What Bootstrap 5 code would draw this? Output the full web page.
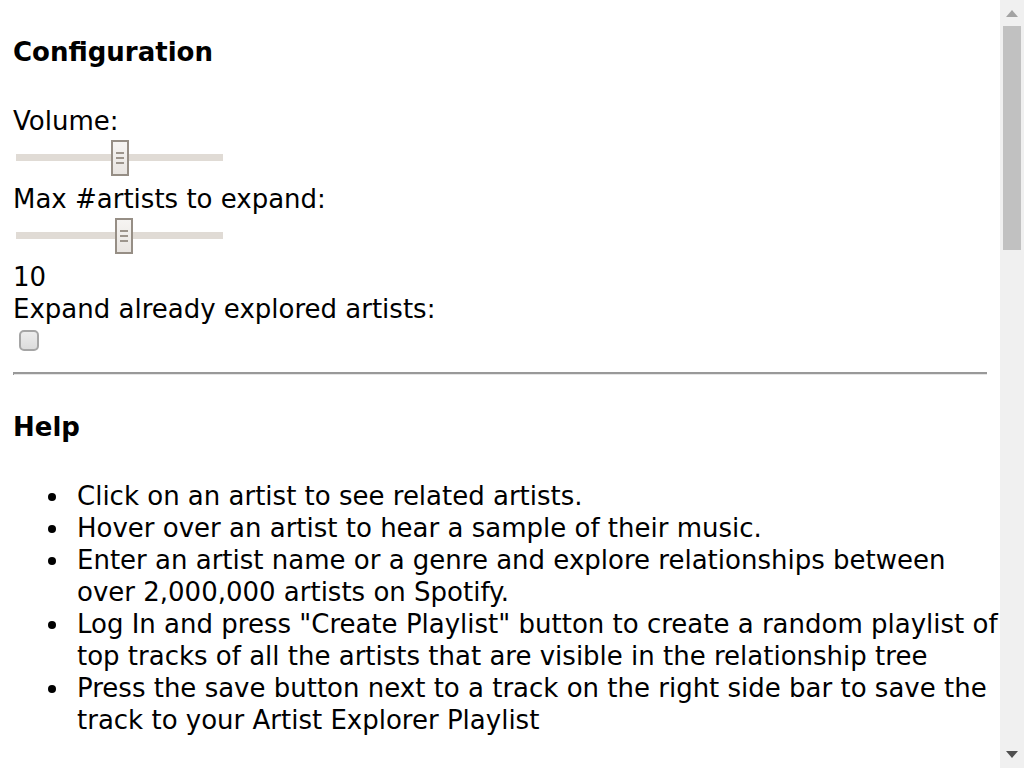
<!DOCTYPE html>
<html lang="en">
<head>
<meta charset="utf-8">
<meta name="viewport" content="width=device-width, initial-scale=1">
<title>Artist Explorer</title>
<link href="https://cdn.jsdelivr.net/npm/bootstrap@5.3.0/dist/css/bootstrap.min.css" rel="stylesheet">
<style>
body{font-family:"DejaVu Sans",sans-serif;font-size:26px;line-height:32px;color:#000;background:#fff}
.panel{min-width:0;padding:36px 13px 0}
.panel-title{font-size:26px;line-height:32px;font-weight:700;margin:0 0 37px}
.slider{
  -webkit-appearance:none;appearance:none;display:block;width:207px;height:36px;margin:3px 3px 7px;
  background:linear-gradient(#e0dbd5,#e0dbd5) 0 14px/100% 7px no-repeat;
}
.slider::-webkit-slider-thumb{
  -webkit-appearance:none;width:18px;height:36px;border:2px solid #968e85;
  background:
    linear-gradient(#9d958c,#9d958c) 50% 10px/8px 2px no-repeat,
    linear-gradient(#9d958c,#9d958c) 50% 15px/8px 2px no-repeat,
    linear-gradient(#9d958c,#9d958c) 50% 20px/8px 2px no-repeat,
    linear-gradient(#f6f4f2,#e9e5e1);
}
.tick{
  -webkit-appearance:none;appearance:none;display:block;width:20px;height:21px;margin:5px 6px 21px;
  border:2px solid #a5a5a5;border-radius:5px;background:linear-gradient(#ececec,#dcdcdc);
}
.rule{height:3px;margin:0 0 36px;opacity:1;border:0;border-left:1px solid #999;background:linear-gradient(#999 0 2px,#e6e6e6 2px)}
.tips{padding-left:58px;margin:0 -13px 0 0}
.tips li{padding-left:6px}
.scroller{width:24px;background:#f0f0f0;padding:10px 3px}
.scroller-thumb{height:30%;background:#c1c1c1;margin-top:9px}
</style>
</head>
<body class="d-flex vh-100 overflow-hidden">
<main class="panel flex-grow-1">
  <h4 class="panel-title">Configuration</h4>
  <label class="d-block" for="volume">Volume:</label>
  <input class="slider" type="range" id="volume" min="0" max="100" value="50">
  <label class="d-block" for="artists">Max #artists to expand:</label>
  <input class="slider" type="range" id="artists" min="0" max="19" value="10">
  <output class="d-block" for="artists">10</output>
  <label class="d-block" for="explored">Expand already explored artists:</label>
  <input class="tick" type="checkbox" id="explored">
  <hr class="rule">
  <h4 class="panel-title">Help</h4>
  <ul class="tips">
    <li>Click on an artist to see related artists.</li>
    <li>Hover over an artist to hear a sample of their music.</li>
    <li>Enter an artist name or a genre and explore relationships between over 2,000,000 artists on Spotify.</li>
    <li>Log In and press "Create Playlist" button to create a random playlist of top tracks of all the artists that are visible in the relationship tree</li>
    <li>Press the save button next to a track on the right side bar to save the track to your Artist Explorer Playlist</li>
  </ul>
</main>
<div class="scroller d-flex flex-column flex-shrink-0" aria-hidden="true">
  <svg class="d-block mx-auto flex-shrink-0" width="12" height="7" viewBox="0 0 12 7"><path d="M0 7 6 0l6 7z" fill="#a3a3a3"/></svg>
  <div class="scroller-thumb"></div>
  <svg class="d-block mx-auto mt-auto flex-shrink-0" width="12" height="7" viewBox="0 0 12 7"><path d="M0 0h12L6 7z" fill="#505050"/></svg>
</div>
<script src="https://cdn.jsdelivr.net/npm/bootstrap@5.3.0/dist/js/bootstrap.bundle.min.js"></script>
</body>
</html>
